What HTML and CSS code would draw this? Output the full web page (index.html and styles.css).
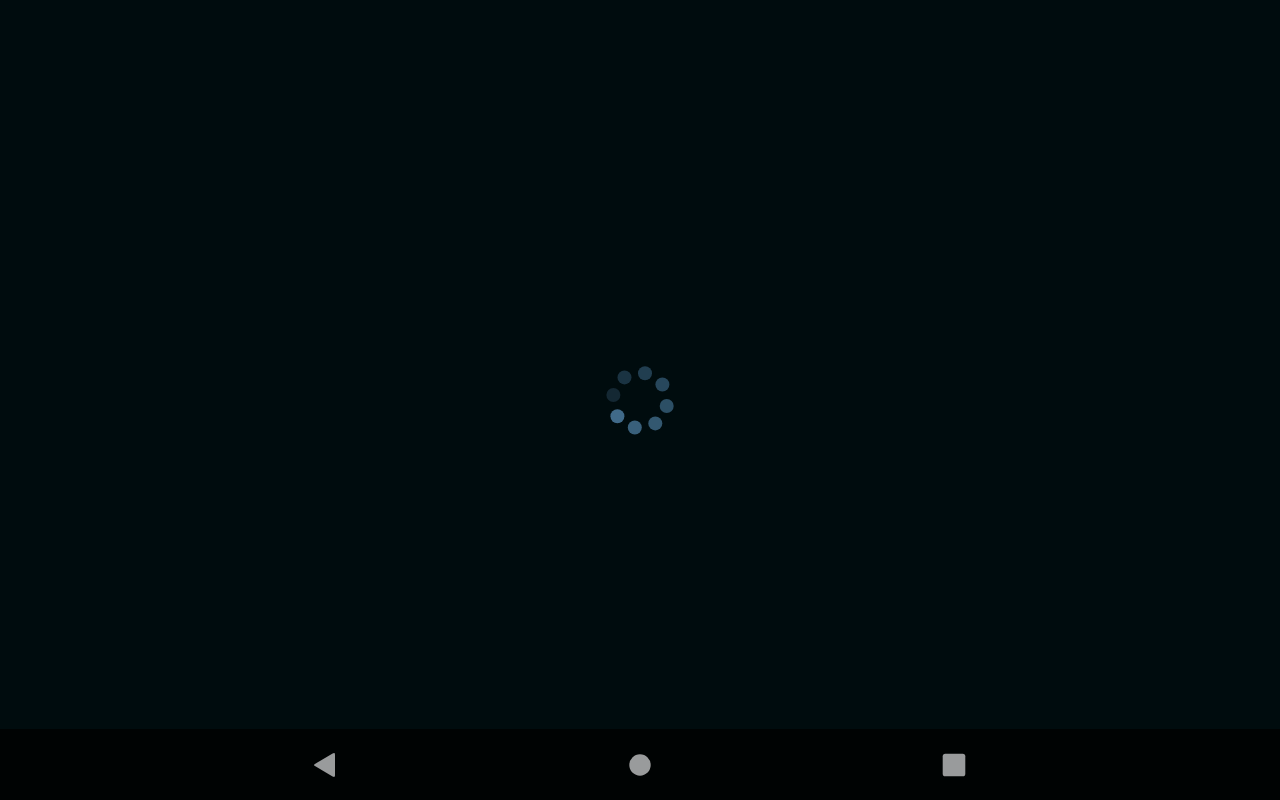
FILE: index.html
```
<!DOCTYPE html>
<html lang="en">

<head>
  <meta charset="UTF-8">
  <meta name="viewport" content="width=device-width, initial-scale=1.0">
  <title>Loading</title>
  <link rel="stylesheet" href="styles.css">
</head>

<body>
  <main class="screen">
    <svg class="spinner" viewBox="-40 -40 80 80" role="img" aria-label="Loading">
      <circle cx="5" cy="-26.8" r="7" fill="#213e50" />
      <circle cx="22.4" cy="-15.5" r="7" fill="#27475c" />
      <circle cx="26.7" cy="6" r="7" fill="#2c4f65" />
      <circle cx="15.3" cy="23.4" r="7" fill="#335870" />
      <circle cx="-5.2" cy="27.5" r="7" fill="#39607b" />
      <circle cx="-22.6" cy="16.3" r="7" fill="#406a89" />
      <circle cx="-26.6" cy="-5" r="7" fill="#142833" />
      <circle cx="-15.5" cy="-22.6" r="7" fill="#1a3342" />
    </svg>
  </main>

  <nav class="navbar" aria-label="System navigation">
    <button class="nav-button" type="button" aria-label="Back">
      <svg class="nav-icon" viewBox="0 0 28 28">
        <path d="M2.5 13.2 20.6 2.4Q23 1.2 23 3.4V24.6Q23 26.8 20.6 25.6L2.5 14.8Q1.6 14 2.5 13.2Z" />
      </svg>
    </button>
    <button class="nav-button" type="button" aria-label="Home">
      <svg class="nav-icon" viewBox="0 0 28 28">
        <circle cx="14" cy="14" r="10.7" />
      </svg>
    </button>
    <button class="nav-button" type="button" aria-label="Recent apps">
      <svg class="nav-icon" viewBox="0 0 28 28">
        <rect x="2.7" y="2.7" width="22.6" height="22.6" rx="2.6" />
      </svg>
    </button>
  </nav>
</body>

</html>
```

FILE: styles.css
```
body {
  margin: 0;
  min-height: 100vh;
  display: flex;
  flex-direction: column;
  background-color: #000c0e;
}

/* top padding balances the navbar so the spinner is centered on the window */
.screen {
  flex: 1;
  display: flex;
  align-items: center;
  justify-content: center;
  padding-top: 71px;
}

.spinner {
  width: 80px;
  height: 80px;
}

.navbar {
  display: flex;
  align-items: center;
  justify-content: center;
  gap: 194px;
  box-sizing: border-box;
  height: 71px;
  padding-top: 1px;
  background-color: #000303;
}

.nav-button {
  display: flex;
  align-items: center;
  justify-content: center;
  width: 120px;
  height: 48px;
  padding: 0;
  border: none;
  background: none;
  cursor: pointer;
}

.nav-icon {
  width: 28px;
  height: 28px;
  fill: #999b9c;
}
```
